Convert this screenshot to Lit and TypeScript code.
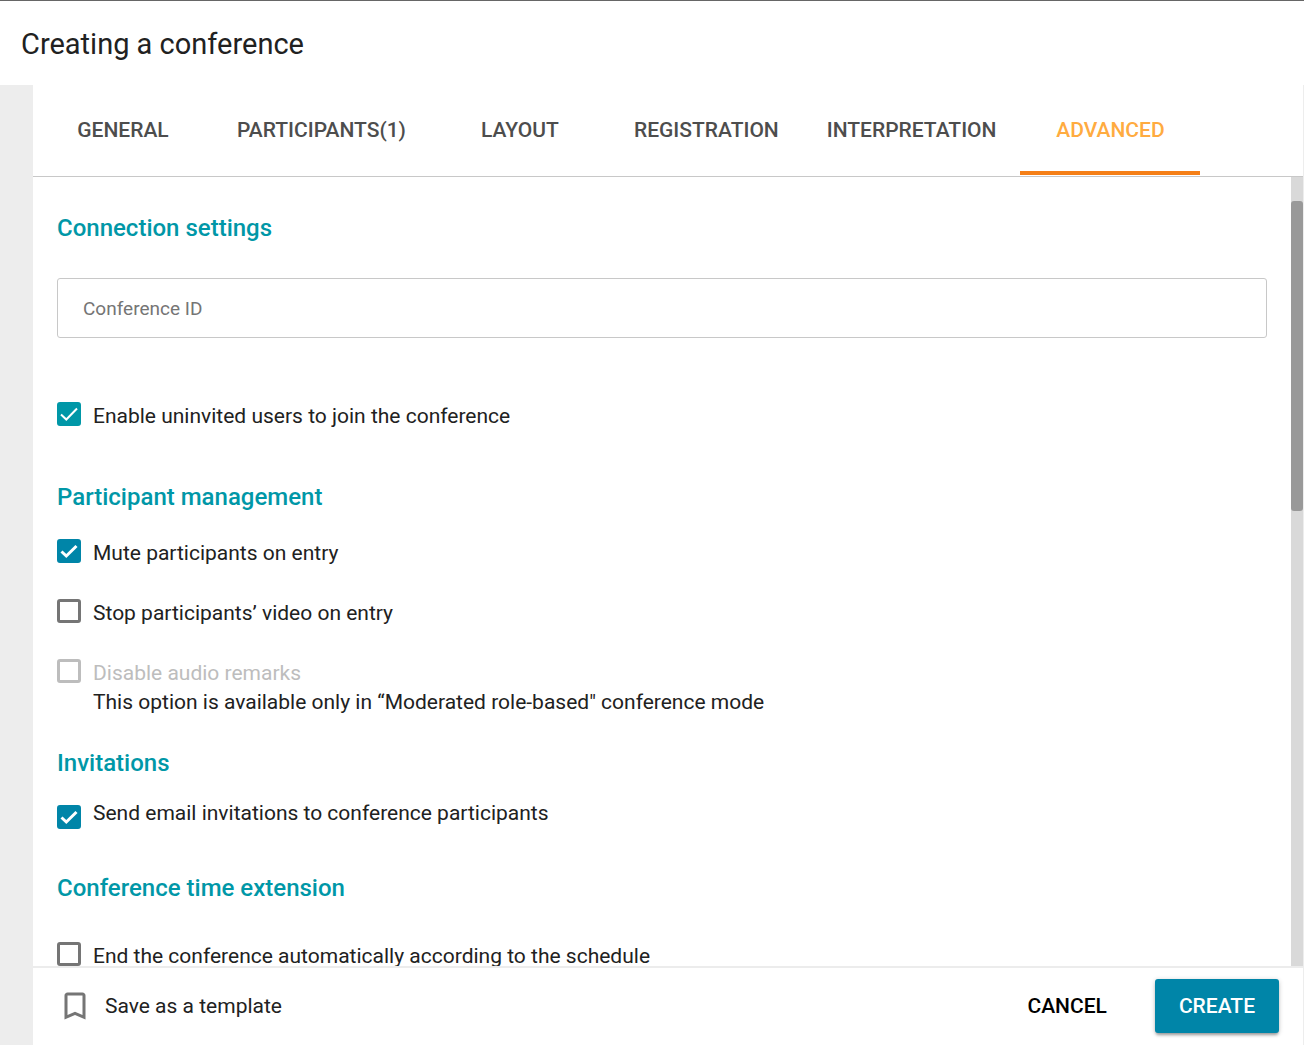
import { LitElement, html, css, svg, nothing } from "lit";
import { customElement, property, state } from "lit/decorators.js";
import { classMap } from "lit/directives/class-map.js";

@customElement("check-option")
class CheckOption extends LitElement {
  @property() label = "";
  @property() note = "";
  @property() tone = "blue";
  @property({ type: Boolean }) checked = false;
  @property({ type: Boolean }) disabled = false;
  @property({ type: Boolean }) low = false;

  static styles = css`
    :host { display: block; }
    .row { display: grid; grid-template-columns: 24px 1fr; column-gap: 12px; row-gap: 1px; align-items: start; }
    .box { display: grid; width: 24px; height: 24px; }
    .low .box { margin-top: 6px; }
    input, svg { grid-area: 1 / 1; }
    input {
      appearance: none; box-sizing: border-box; margin: 0; width: 24px; height: 24px;
      border: 3px solid #757575; border-radius: 3px; background: #fff;
    }
    input:checked { border-color: #0085a8; background: #0085a8; }
    .teal input:checked { border-color: #0097a7; background: #0097a7; }
    input:disabled { border-color: #bdbdbd; }
    svg { width: 24px; height: 24px; pointer-events: none; }
    label { font-size: 21px; line-height: 28px; color: #212121; }
    .off label { color: #bdbdbd; }
    .note { grid-column: 2; margin: 0; font-size: 21px; line-height: 28px; color: #212121; }
  `;

  render() {
    const teal = this.tone === "teal";
    const mark = teal ? "M4 12.500L9.300 17.500L20 6.500" : "M4.500 12.500L9.300 17L19.500 7";
    return html`
      <div class=${classMap({ row: true, teal, off: this.disabled, low: this.low })}>
        <span class="box">
          <input id="option" type="checkbox" .checked=${this.checked} ?disabled=${this.disabled}
            @change=${(e: Event) => (this.checked = (e.target as HTMLInputElement).checked)} />
          ${this.checked
            ? html`<svg viewBox="0 0 24 24" fill="none" aria-hidden="true">${svg`<path d=${mark} stroke="#fff" stroke-width=${teal ? 2 : 3}></path>`}</svg>`
            : nothing}
        </span>
        <label for="option">${this.label}</label>
        ${this.note ? html`<p class="note">${this.note}</p>` : nothing}
      </div>
    `;
  }
}

const TABS = ["GENERAL", "PARTICIPANTS(1)", "LAYOUT", "REGISTRATION", "INTERPRETATION", "ADVANCED"];

@customElement("app-root")
class AppRoot extends LitElement {
  @state() private active = "ADVANCED";

  static styles = css`
    :host {
      display: flex; flex-direction: column; box-sizing: border-box; height: 100vh;
      border-top: 1px solid #666; background: #fff; color: #212121;
      font-family: Roboto, "Liberation Sans", sans-serif;
    }
    button { border: 0; background: none; font-family: inherit; cursor: pointer; }
    header { padding: 25px 21px 23px; }
    h1 { margin: 0; font-size: 29px; line-height: 36px; font-weight: 400; }
    .shell { flex: 1; min-height: 0; display: flex; background: #ededed; }
    .panel {
      flex: 1; min-width: 0; margin-left: 33px; display: flex; flex-direction: column;
      background: #fff; border-right: 1px solid #ededed;
    }
    .tabs { display: flex; border-bottom: 1px solid #c8c8c8; padding-bottom: 1px; }
    .tab {
      box-sizing: border-box; min-width: 180px; height: 90px; padding: 4px 24px 0;
      border-bottom: 4px solid transparent;
      font-size: 21px; line-height: 28px; font-weight: 500; color: #4d4d4d;
    }
    .tab.active { color: #ffab40; border-bottom-color: #f57f17; }
    .middle { flex: 1; min-height: 0; display: flex; }
    .content { flex: 1; min-width: 0; overflow-y: auto; scrollbar-width: none; padding: 0 24px; }
    .track { width: 12px; padding-top: 24px; box-sizing: border-box; background: #d9d9d9; }
    .thumb { height: 310px; border-radius: 3px; background: #999; }
    h2 { margin: 0; font-size: 24px; line-height: 32px; font-weight: 500; color: #0097a7; }
    .connection { padding: 35px 0 51px; }
    .field {
      display: block; box-sizing: border-box; width: 100%; height: 60px; margin: 34px 0 64px;
      padding: 0 25px; border: 1px solid #c8c8c8; border-radius: 3px; background: #fff;
      font-family: inherit; font-size: 19px; color: #212121;
    }
    .field::placeholder { color: #757575; opacity: 1; }
    .options { display: flex; flex-direction: column; gap: 32px; padding: 26px 0 31px; }
    .invitations { padding: 20px 0 43px; }
    .extension { padding: 38px 0; }
    footer {
      display: flex; align-items: center; padding: 11px 24px 12px;
      border-top: 2px solid #ececec;
    }
    .save {
      display: flex; align-items: center; gap: 12px; margin-right: auto; padding: 0;
      font-size: 21px; line-height: 28px; color: #212121;
    }
    .save svg { width: 36px; height: 36px; }
    .action { height: 54px; padding: 0 24px; border-radius: 3px; font-size: 21px; font-weight: 500; color: #000; }
    .primary {
      margin-left: 24px; background: #0085a8; color: #fff;
      box-shadow: 0 3px 3px -1px rgba(0, 0, 0, 0.3), 0 1px 5px rgba(0, 0, 0, 0.2);
    }
  `;

  render() {
    return html`
      <header><h1>Creating a conference</h1></header>
      <div class="shell">
        <main class="panel">
          <nav class="tabs" role="tablist">
            ${TABS.map((name) => html`
              <button class=${classMap({ tab: true, active: name === this.active })} role="tab"
                aria-selected=${name === this.active} @click=${() => (this.active = name)}>${name}</button>`)}
          </nav>
          <div class="middle">
            <div class="content">
              <section class="connection">
                <h2>Connection settings</h2>
                <input class="field" type="text" placeholder="Conference ID" aria-label="Conference ID" />
                <check-option label="Enable uninvited users to join the conference" tone="teal" checked></check-option>
              </section>
              <section>
                <h2>Participant management</h2>
                <div class="options">
                  <check-option label="Mute participants on entry" checked></check-option>
                  <check-option label="Stop participants’ video on entry"></check-option>
                  <check-option label="Disable audio remarks" disabled
                    note="This option is available only in “Moderated role-based&quot; conference mode"></check-option>
                </div>
              </section>
              <section>
                <h2>Invitations</h2>
                <div class="invitations">
                  <check-option label="Send email invitations to conference participants" checked low></check-option>
                </div>
              </section>
              <section>
                <h2>Conference time extension</h2>
                <div class="extension">
                  <check-option label="End the conference automatically according to the schedule"></check-option>
                </div>
              </section>
            </div>
            <div class="track"><div class="thumb"></div></div>
          </div>
          <footer>
            <button class="save">
              <svg viewBox="0 0 24 24" aria-hidden="true">
                <path fill="#757575" d="M17 3H7c-1.100 0-2 .9-2 2v16l7-3 7 3V5c0-1.100-.9-2-2-2zm0 15l-5-2.180L7 18V5h10v13z"></path>
              </svg>
              <span>Save as a template</span>
            </button>
            <button class="action">CANCEL</button>
            <button class="action primary">CREATE</button>
          </footer>
        </main>
      </div>
    `;
  }
}
